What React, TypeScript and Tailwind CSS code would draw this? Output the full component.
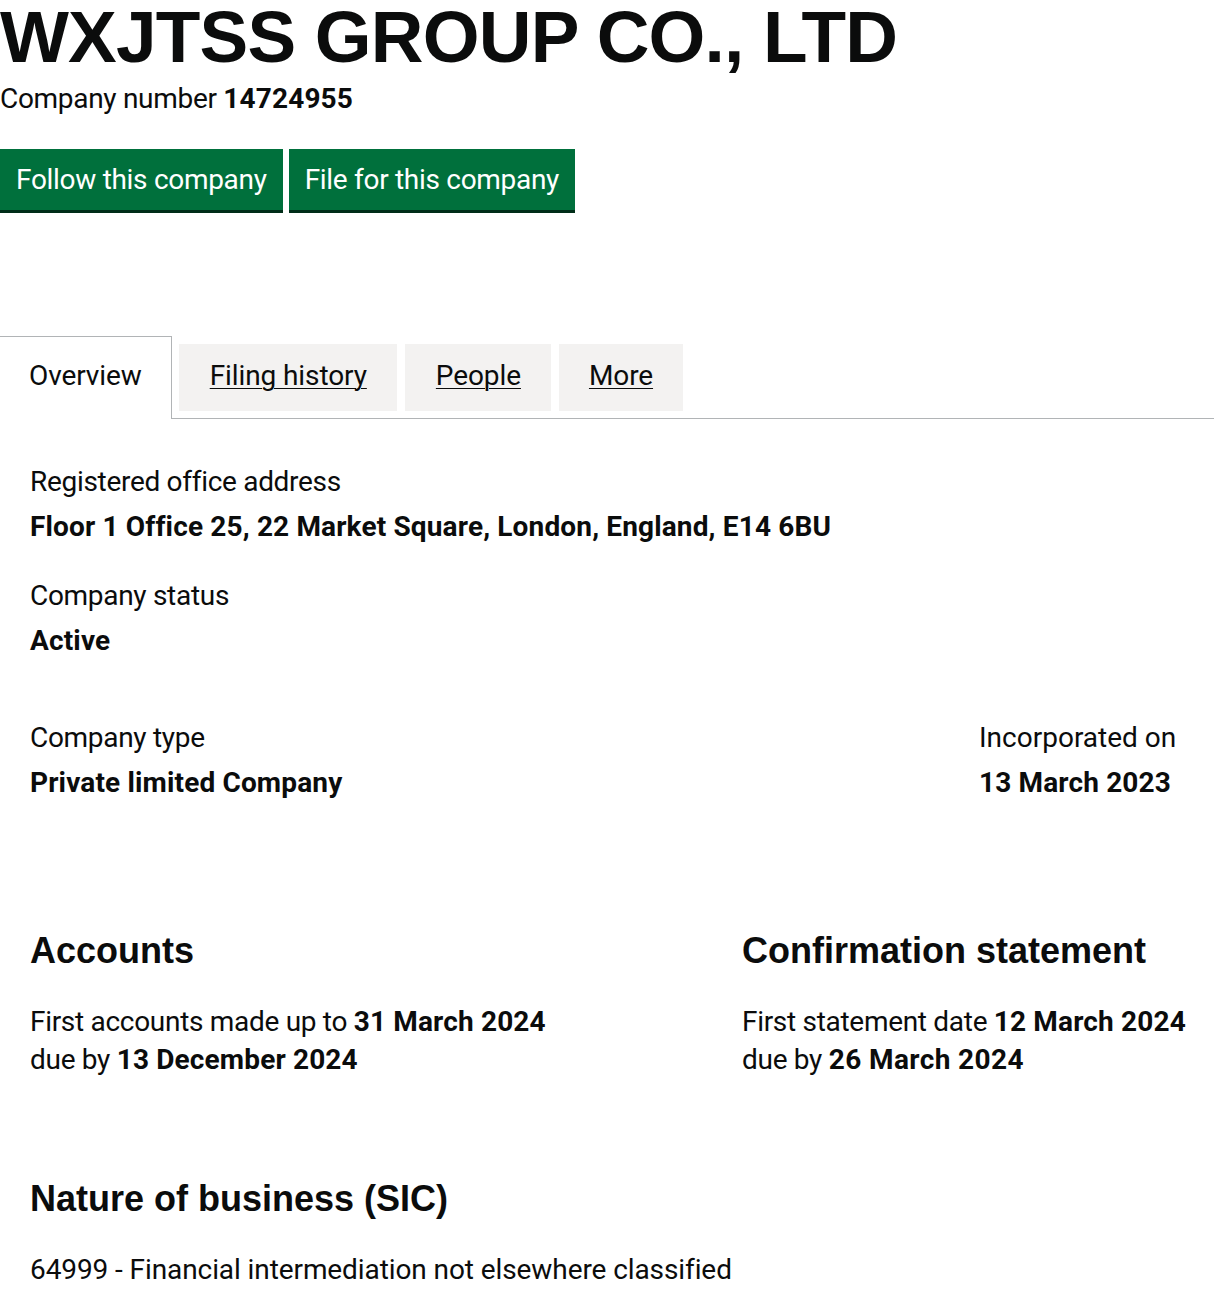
import React from "react";

const body = "font-['Roboto',sans-serif] text-[28px] leading-[32px] tracking-[-0.3px] text-[#0b0c0c]";
const bold = "font-bold tracking-[0.15px]";
const head = "font-['Liberation_Sans',Arial,sans-serif] font-bold text-[36px] leading-[40px] text-[#0b0c0c]";
const tab = "font-['Roboto',sans-serif] text-[28px] leading-[32px] tracking-[-0.1px] text-[#0b0c0c]";

export default function App() {
  return (
    <div className="bg-white w-[1214px] min-h-[1298px] overflow-hidden text-[#0b0c0c]">
      <h1 className="font-['Liberation_Sans',Arial,sans-serif] font-bold text-[73px] leading-[74px] tracking-[-0.8px] whitespace-nowrap">
        WXJTSS GROUP CO., LTD
      </h1>
      <p className={`${body} mt-[9px] whitespace-nowrap`}>
        Company number <strong className={bold}>14724955</strong>
      </p>

      <div className="mt-[34px] flex gap-[6px]">
        <button className={`${body} text-white bg-[#00703c] px-[16px] pt-[15px] pb-[14px] shadow-[0_3px_0_#002d18] whitespace-nowrap`}>
          Follow this company
        </button>
        <button className={`${body} text-white bg-[#00703c] px-[16px] pt-[15px] pb-[14px] shadow-[0_3px_0_#002d18] whitespace-nowrap`}>
          File for this company
        </button>
      </div>

      <div className="mt-[126px] flex items-end gap-[7px] border-b border-[#b1b4b6] h-[83px]">
        <div className={`${tab} bg-white border-t border-r border-[#b1b4b6] pl-[29px] pr-[29px] pt-[23px] pb-[27px] -mb-px`}>
          Overview
        </div>
        <div className="flex gap-[8px] mb-[7px]">
          <a className={`${tab} bg-[#f3f2f1] pl-[31px] pr-[30px] pt-[16px] pb-[19px] underline decoration-1 underline-offset-[3px]`}>
            Filing history
          </a>
          <a className={`${tab} bg-[#f3f2f1] pl-[31px] pr-[30px] pt-[16px] pb-[19px] underline decoration-1 underline-offset-[3px]`}>
            People
          </a>
          <a className={`${tab} bg-[#f3f2f1] pl-[30px] pr-[30px] pt-[16px] pb-[19px] underline decoration-1 underline-offset-[3px]`}>
            More
          </a>
        </div>
      </div>

      <div className="mt-[47px]">
        <div className="pl-[30px]">
          <p className={body}>Registered office address</p>
          <p className={`${body} ${bold} mt-[13px] whitespace-nowrap`}>
            Floor 1 Office 25, 22 Market Square, London, England, E14 6BU
          </p>
          <p className={`${body} mt-[37px]`}>Company status</p>
          <p className={`${body} ${bold} mt-[13px]`}>Active</p>
        </div>

        <div className="mt-[65px] flex">
          <div className="w-[979px] pl-[30px]">
            <p className={body}>Company type</p>
            <p className={`${body} ${bold} mt-[13px]`}>Private limited Company</p>
          </div>
          <div>
            <p className={`${body} tracking-[0px] whitespace-nowrap`}>Incorporated on</p>
            <p className={`${body} ${bold} mt-[13px] whitespace-nowrap`}>13 March 2023</p>
          </div>
        </div>

        <div className="mt-[132px] grid grid-cols-[712px_1fr]">
          <div className="pl-[30px]">
            <h2 className={head}>Accounts</h2>
            <p className={`${body} leading-[38px] mt-[32px] whitespace-nowrap`}>
              First accounts made up to <strong className={bold}>31 March 2024</strong>
              <br />
              due by <strong className={bold}>13 December 2024</strong>
            </p>
          </div>
          <div className="pl-[30px]">
            <h2 className={`${head} whitespace-nowrap`}>Confirmation statement</h2>
            <p className={`${body} leading-[38px] mt-[32px] whitespace-nowrap`}>
              First statement date <strong className={bold}>12 March 2024</strong>
              <br />
              due by <strong className="font-bold tracking-[0.4px]">26 March 2024</strong>
            </p>
          </div>
        </div>

        <div className="pl-[30px]">
          <h2 className={`${head} mt-[100px]`}>Nature of business (SIC)</h2>
          <p className={`${body} tracking-[-0.09px] mt-[35px] whitespace-nowrap`}>
            64999 - Financial intermediation not elsewhere classified
          </p>
        </div>
      </div>
    </div>
  );
}
